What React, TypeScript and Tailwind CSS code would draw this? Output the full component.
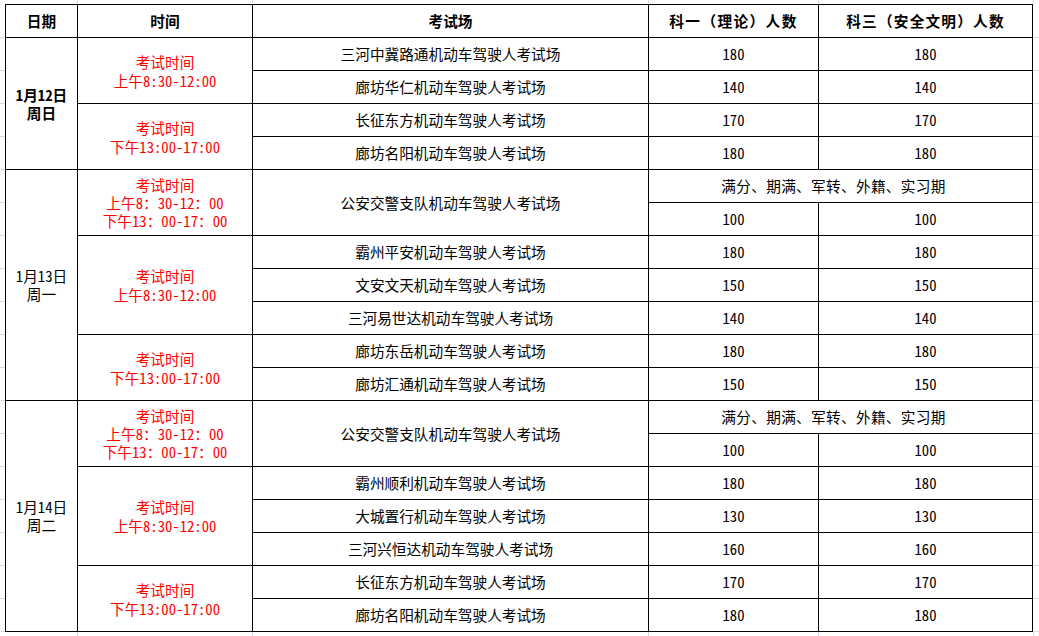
import React from "react";

const F = "[font-family:'Noto_Sans_Mono_CJK_SC','Noto_Sans_CJK_SC',sans-serif]";

function Cell({ children, className = "" }: { children?: React.ReactNode; className?: string }) {
  return (
    <div className={`bg-white flex flex-col items-center justify-center text-center leading-[18px] ${className}`}>
      {children}
    </div>
  );
}

function Time({ lines }: { lines: string[] }) {
  return (
    <>
      {lines.map((l, i) => (
        <div key={i} className="whitespace-nowrap">{l}</div>
      ))}
    </>
  );
}

type Row = { v: string; a: string; b: string };

export default function App() {
  const g1a: Row[] = [
    { v: "三河中冀路通机动车驾驶人考试场", a: "180", b: "180" },
    { v: "廊坊华仁机动车驾驶人考试场", a: "140", b: "140" },
  ];
  const g1b: Row[] = [
    { v: "长征东方机动车驾驶人考试场", a: "170", b: "170" },
    { v: "廊坊名阳机动车驾驶人考试场", a: "180", b: "180" },
  ];
  const g2b: Row[] = [
    { v: "霸州平安机动车驾驶人考试场", a: "180", b: "180" },
    { v: "文安文天机动车驾驶人考试场", a: "150", b: "150" },
    { v: "三河易世达机动车驾驶人考试场", a: "140", b: "140" },
  ];
  const g2c: Row[] = [
    { v: "廊坊东岳机动车驾驶人考试场", a: "180", b: "180" },
    { v: "廊坊汇通机动车驾驶人考试场", a: "150", b: "150" },
  ];
  const g3b: Row[] = [
    { v: "霸州顺利机动车驾驶人考试场", a: "180", b: "180" },
    { v: "大城置行机动车驾驶人考试场", a: "130", b: "130" },
    { v: "三河兴恒达机动车驾驶人考试场", a: "160", b: "160" },
  ];
  const g3c: Row[] = [
    { v: "长征东方机动车驾驶人考试场", a: "170", b: "170" },
    { v: "廊坊名阳机动车驾驶人考试场", a: "180", b: "180" },
  ];

  const rows = (rs: Row[], key: string) =>
    rs.map((r, i) => (
      <React.Fragment key={key + i}>
        <Cell>{r.v}</Cell>
        <Cell>{r.a}</Cell>
        <Cell>{r.b}</Cell>
      </React.Fragment>
    ));

  const am = ["考试时间", "上午8:30-12:00"];
  const pm = ["考试时间", "下午13:00-17:00"];
  const full = ["考试时间", "上午8：30-12：00", "下午13：00-17：00"];

  const gap = "h-full border-r border-[#d4dbe8]";

  return (
    <div
      className={`w-[1039px] h-[636px] overflow-hidden bg-white ${F} text-[14.67px] text-black bg-[repeating-linear-gradient(to_bottom,transparent_0,transparent_32px,#d4dbe8_32px,#d4dbe8_33px)] bg-[position:0_5px] flex flex-col`}
    >
      <div className="h-[4px] flex shrink-0 bg-white">
        <div className={`w-[78px] ${gap}`} />
        <div className={`w-[175px] ${gap}`} />
        <div className={`w-[396px] ${gap}`} />
        <div className={`w-[170px] ${gap}`} />
        <div className={`w-[215px] ${gap}`} />
      </div>
      <div className="flex shrink-0">
        <div className="w-[5px]" />
        <div className="grid grid-cols-[71px_174px_395px_169px_213px] grid-rows-[repeat(19,32px)] gap-px p-px bg-black w-[1028px]">
          <Cell className="font-bold">日期</Cell>
          <Cell className="font-bold">时间</Cell>
          <Cell className="font-bold">考试场</Cell>
          <Cell className="font-bold tracking-[1.4px]">科一（理论）人数</Cell>
          <Cell className="font-bold tracking-[1.2px]">科三（安全文明）人数</Cell>

          <Cell className="row-span-4 font-bold">
            <div>1月12日</div>
            <div>周日</div>
          </Cell>
          <Cell className="row-span-2 text-[#ff0000] leading-[19px]"><Time lines={am} /></Cell>
          {rows(g1a, "a")}
          <Cell className="row-span-2 text-[#ff0000] leading-[19px]"><Time lines={pm} /></Cell>
          {rows(g1b, "b")}

          <Cell className="row-span-7">
            <div>1月13日</div>
            <div>周一</div>
          </Cell>
          <Cell className="row-span-2 text-[#ff0000]"><Time lines={full} /></Cell>
          <Cell className="row-span-2">公安交警支队机动车驾驶人考试场</Cell>
          <Cell className="col-span-2 pr-[14px] tracking-[0.3px]">满分、期满、军转、外籍、实习期</Cell>
          <Cell>100</Cell>
          <Cell>100</Cell>
          <Cell className="row-span-3 text-[#ff0000] leading-[19px]"><Time lines={am} /></Cell>
          {rows(g2b, "c")}
          <Cell className="row-span-2 text-[#ff0000] leading-[19px]"><Time lines={pm} /></Cell>
          {rows(g2c, "d")}

          <Cell className="row-span-7">
            <div>1月14日</div>
            <div>周二</div>
          </Cell>
          <Cell className="row-span-2 text-[#ff0000]"><Time lines={full} /></Cell>
          <Cell className="row-span-2">公安交警支队机动车驾驶人考试场</Cell>
          <Cell className="col-span-2 pr-[14px] tracking-[0.3px]">满分、期满、军转、外籍、实习期</Cell>
          <Cell>100</Cell>
          <Cell>100</Cell>
          <Cell className="row-span-3 text-[#ff0000] leading-[19px]"><Time lines={am} /></Cell>
          {rows(g3b, "e")}
          <Cell className="row-span-2 text-[#ff0000] leading-[19px]"><Time lines={pm} /></Cell>
          {rows(g3c, "f")}
        </div>
      </div>
      <div className="h-[5px] flex shrink-0 bg-white">
        <div className={`w-[78px] ${gap}`} />
        <div className={`w-[175px] ${gap}`} />
        <div className={`w-[396px] ${gap}`} />
        <div className={`w-[170px] ${gap}`} />
        <div className={`w-[215px] ${gap}`} />
      </div>
    </div>
  );
}
